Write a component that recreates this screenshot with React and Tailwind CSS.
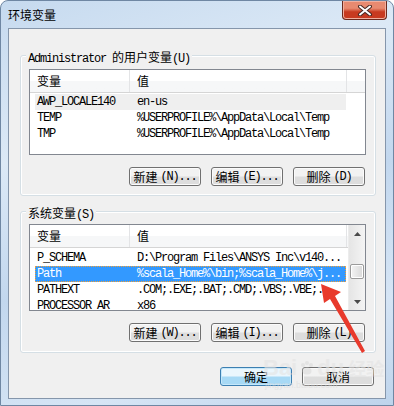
const MONO = "font-['Liberation_Mono',monospace] text-[12px] tracking-[-1.2px]"
const ZH = "font-['Noto_Sans_CJK_SC',sans-serif] text-[12px] tracking-normal"

const USER_VARS = [
  { name: 'AWP_LOCALE140', value: 'en-us', muted: true },
  { name: 'TEMP', value: '%USERPROFILE%\\AppData\\Local\\Temp' },
  { name: 'TMP', value: '%USERPROFILE%\\AppData\\Local\\Temp' },
]

const SYSTEM_VARS = [
  { name: 'P_SCHEMA', value: 'D:\\Program Files\\ANSYS Inc\\v140...' },
  { name: 'Path', value: '%scala_Home%\\bin;%scala_Home%\\j...', selected: true },
  { name: 'PATHEXT', value: '.COM;.EXE;.BAT;.CMD;.VBS;.VBE;...' },
  { name: 'PROCESSOR_AR', value: 'x86' },
]

function Label({ zh, key_ }) {
  return (
    <span className="whitespace-nowrap">
      <span className={ZH}>{zh}</span>
      <span className={MONO}>{key_}</span>
    </span>
  )
}

function Button({ zh, hotkey, primary }) {
  return (
    <div
      className={
        primary
          ? 'w-[72px] h-[19px] rounded-[3px] border border-[#3c7fb1] bg-linear-to-b from-[#eaf6fd] from-45% to-[#a7d9f5] to-55% shadow-[inset_0_0_0_1px_#c5e8fb] flex items-center justify-center text-black'
          : 'w-[72px] h-[19px] rounded-[3px] border border-[#707070] bg-linear-to-b from-[#f2f2f2] from-45% to-[#dddddd] to-55% shadow-[inset_0_0_0_1px_#fbfbfb] flex items-center justify-center text-black'
      }
    >
      <span className={ZH}>{zh}</span>
      {hotkey && <span className={MONO + ' ml-[3px]'}>{hotkey}</span>}
    </div>
  )
}

function Header({ full }) {
  return (
    <div className="h-[23px] flex bg-linear-to-b from-white from-50% to-[#f6f7f8] to-50% border-b border-[#d5d5d5]">
      <div className="w-[100px] border-r border-[#e3e4e6] flex items-center pl-[7px]">
        <span className={ZH}>变量</span>
      </div>
      <div className="w-[217px] border-r border-[#e3e4e6] flex items-center pl-[7px]">
        <span className={ZH}>值</span>
      </div>
      {full && <div className="flex-1" />}
    </div>
  )
}

function Row({ name, value, muted, selected }) {
  const base = 'ml-[5px] w-[311px] h-[16px] flex items-center whitespace-nowrap overflow-hidden'
  const tone = selected
    ? ' bg-[#3399ff] text-white outline outline-1 outline-dotted outline-[#f5a033] -outline-offset-1'
    : muted
      ? ' bg-[#efefef] text-black'
      : ' text-black'
  return (
    <div className={base + tone}>
      <div className={MONO + ' w-[95px] pl-[2px]'}>{name}</div>
      <div className={MONO + ' pl-[7px]'}>{value}</div>
    </div>
  )
}

function Arrow({ up }) {
  return (
    <div className="h-[17px] flex items-center justify-center">
      <svg width="7" height="4" viewBox="0 0 7 4">
        <polygon points={up ? '3.5,0 7,4 0,4' : '0,0 7,0 3.5,4'} fill="#4a4a4a" />
      </svg>
    </div>
  )
}

function GroupBox({ label, height, children }) {
  return (
    <div
      className="relative ml-[11px] w-[356px] rounded-[3px] border border-[#d5dfe5] shadow-[inset_0_0_0_1px_#ffffff]"
      style={{ height }}
    >
      <div className="absolute -top-[9px] left-[5px] px-[2px] bg-[#f0f0f0] leading-[16px]">{label}</div>
      {children}
    </div>
  )
}

export default function App() {
  return (
    <div className="relative w-[394px] h-[406px] overflow-hidden rounded-t-[8px] border border-[#6f87a3] bg-[linear-gradient(160deg,#c6daef_0%,#dce9f6_30%,#c2d7ee_55%,#d6e5f5_80%,#bed4ec_100%)] font-['Noto_Sans_CJK_SC',sans-serif]">
      {/* title bar */}
      <div className="h-[27px] flex justify-between">
        <div className="pl-[7px] pt-[6px] text-[12px] text-black leading-[16px]">环境变量</div>
        <div className="mr-[6px] w-[45px] h-[19px] rounded-b-[4px] border border-t-0 border-[#6b2a1e] bg-linear-to-b from-[#e88a70] from-40% to-[#c73a20] to-60% shadow-[inset_0_0_0_1px_#f0b0a0] flex items-center justify-center">
          <svg width="16" height="11" viewBox="0 0 16 11">
            <path d="M3 1.5 L13 9.5 M13 1.5 L3 9.5" stroke="#4a2a24" strokeWidth="4" strokeLinecap="round" />
            <path d="M3 1.5 L13 9.5 M13 1.5 L3 9.5" stroke="#ffffff" strokeWidth="2" strokeLinecap="round" />
          </svg>
        </div>
      </div>

      {/* client area */}
      <div className="mx-[7px] h-[371px] border border-[#8596ab] bg-[#f0f0f0] flex flex-col">
        <div className="h-[26px]" />
        <GroupBox
          height={141}
          label={
            <span className="whitespace-nowrap">
              <span className={MONO}>Administrator </span>
              <span className={ZH}>的用户变量</span>
              <span className={MONO}>(U)</span>
            </span>
          }
        >
          <div className="ml-[8px] mt-[13px] w-[337px] h-[86px] border border-[#828790] bg-white">
            <Header full />
            <div className="mt-[1px]">
              {USER_VARS.map(v => (
                <Row key={v.name} {...v} />
              ))}
            </div>
          </div>
          <div className="mt-[12px] ml-[108px] flex gap-[10px]">
            <Button zh="新建" hotkey="(N)..." />
            <Button zh="编辑" hotkey="(E)..." />
            <Button zh="删除" hotkey="(D)" />
          </div>
        </GroupBox>

        <div className="h-[15px]" />
        <GroupBox height={142} label={<Label zh="系统变量" key_="(S)" />}>
          <div className="ml-[8px] mt-[12px] w-[337px] h-[87px] border border-[#828790] bg-white flex overflow-hidden">
            <div className="w-[318px]">
              <Header />
              <div className="mt-[2px]">
                {SYSTEM_VARS.map(v => (
                  <Row key={v.name} {...v} />
                ))}
              </div>
            </div>
            <div className="w-[17px] flex flex-col bg-linear-to-r from-[#e5e5e5] to-[#f4f4f4] border-l border-[#ececec]">
              <Arrow up />
              <div className="h-[22px]" />
              <div className="h-[15px] mx-[1px] rounded-[2px] border border-[#9b9b9b] bg-linear-to-r from-[#f4f4f4] to-[#d9d9d9] shadow-[inset_0_0_0_1px_#ffffff]" />
              <div className="flex-1" />
              <Arrow />
            </div>
          </div>
          <div className="mt-[12px] ml-[108px] flex gap-[10px]">
            <Button zh="新建" hotkey="(W)..." />
            <Button zh="编辑" hotkey="(I)..." />
            <Button zh="删除" hotkey="(L)" />
          </div>
        </GroupBox>

        <div className="mt-[14px] mr-[11px] flex justify-end gap-[10px]">
          <Button zh="确定" primary />
          <Button zh="取消" />
        </div>
      </div>

      {/* baidu watermark */}
      <div className="absolute left-[262px] top-[355px] flex flex-col items-start opacity-60 pointer-events-none">
        <div className="flex items-center gap-[2px] text-[22px] leading-[24px] font-['Liberation_Sans',sans-serif] font-bold text-[#e4e4e4]">
          <span>Bai</span>
          <svg width="16" height="16" viewBox="0 0 16 16">
            <circle cx="4" cy="5" r="2" fill="#dcdcdc" />
            <circle cx="8" cy="3" r="2" fill="#dcdcdc" />
            <circle cx="12" cy="5" r="2" fill="#dcdcdc" />
            <ellipse cx="8" cy="11" rx="4.5" ry="3.5" fill="#dcdcdc" />
          </svg>
          <span>du</span>
          <span className="text-[18px] font-['Noto_Sans_CJK_SC',sans-serif] ml-[2px]">经验</span>
        </div>
        <div className="text-[9px] leading-[10px] text-[#dcdcdc] font-['Liberation_Sans',sans-serif] ml-[2px]">jingyan.baidu.com</div>
      </div>

      {/* red annotation arrow */}
      <svg className="absolute left-0 top-0 pointer-events-none" width="394" height="406" viewBox="0 0 394 406">
        <polygon
          points="320,283 340,291 334,295 364,350 361,352 329,298 323,302"
          fill="#e83a2c"
        />
      </svg>
    </div>
  )
}
